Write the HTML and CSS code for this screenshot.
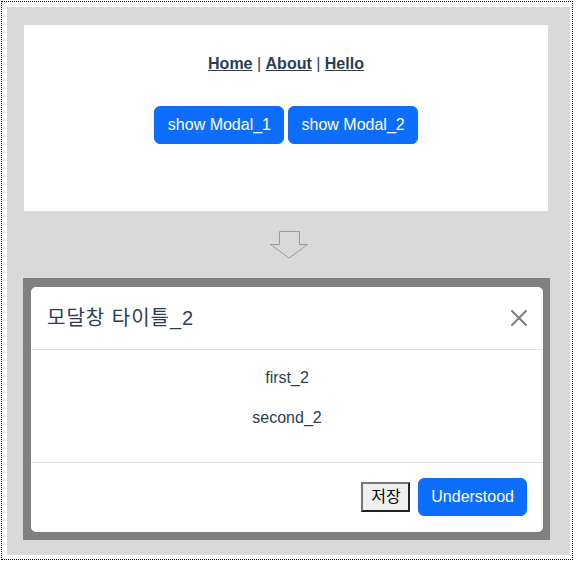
FILE: index.html
```html
<!DOCTYPE html>
<html lang="ko">
<head>
<meta charset="utf-8">
<title>Modal</title>
<link rel="stylesheet" href="styles.css">
</head>
<body>
<div class="frame">
  <div class="stage">
    <div class="app-panel">
      <nav class="nav"><a href="#">Home</a> | <a href="#">About</a> | <a href="#">Hello</a></nav>
      <div class="btn-row">
        <button class="btn">show Modal_1</button>
        <button class="btn">show Modal_2</button>
      </div>
    </div>
    <div class="arrow">
      <svg width="40" height="30" viewBox="0 0 40 30"><polygon points="10.5,1.5 30.5,1.5 30.5,14.5 38.5,14.5 20,28 1.5,14.5 10.5,14.5" fill="#d9d9d9" stroke="#9a9a9a" stroke-width="1"/></svg>
    </div>
    <div class="backdrop">
      <div class="modal">
        <div class="modal-header">
          <h5 class="modal-title">모달창 타이틀_2</h5>
          <button class="btn-close" aria-label="Close"><svg width="16" height="16" viewBox="0 0 16 16"><path d="M.293.293a1 1 0 0 1 1.414 0L8 6.586 14.293.293a1 1 0 1 1 1.414 1.414L9.414 8l6.293 6.293a1 1 0 0 1-1.414 1.414L8 9.414l-6.293 6.293a1 1 0 0 1-1.414-1.414L6.586 8 .293 1.707a1 1 0 0 1 0-1.414z" fill="#000"/></svg></button>
        </div>
        <div class="modal-body">
          <p>first_2</p>
          <p>second_2</p>
        </div>
        <div class="modal-footer">
          <button class="plain-btn">저장</button>
          <button class="btn">Understood</button>
        </div>
      </div>
    </div>
  </div>
</div>
</body>
</html>
```

FILE: styles.css
```css
* { box-sizing: border-box; }
body {
  margin: 0;
  font-family: "Liberation Sans", "Noto Sans CJK KR", sans-serif;
  color: #2c3e50;
  font-size: 16px;
}
.frame {
  margin: 1px 0 0 1px;
  width: 572px;
  border: 1px dotted #000;
  padding: 5px 2px 4px 5px;
}
.stage {
  width: 563px;
  height: 548px;
  background: #d9d9d9;
  display: flex;
  flex-direction: column;
  padding-top: 18px;
}
.app-panel {
  margin-left: 17px;
  width: 524px;
  height: 186px;
  background: #fff;
  padding-top: 30px;
  text-align: center;
}
.nav {
  line-height: 18px;
  font-weight: normal;
  color: #2c3e50;
}
.nav a {
  color: #2c3e50;
  font-weight: bold;
  text-decoration: underline;
}
.btn-row {
  margin-top: 33px;
  display: flex;
  justify-content: center;
  gap: 4px;
}
.btn {
  font-family: "Liberation Sans", sans-serif;
  font-size: 16px;
  line-height: 24px;
  color: #fff;
  background: #0d6efd;
  border: 1px solid #0d6efd;
  border-radius: 6px;
  padding: 6px 12px 6px 12.5px;
}
.arrow {
  height: 67px;
  display: flex;
  justify-content: center;
  padding-top: 19px;
}
.arrow svg { display: block; }
.backdrop {
  margin-left: 16px;
  width: 527px;
  height: 262px;
  background: #808080;
  padding: 9px 7px 8px 8px;
}
.modal {
  width: 512px;
  height: 245px;
  background: #fff;
  border-radius: 5px;
  display: flex;
  flex-direction: column;
}
.modal-header {
  display: flex;
  align-items: center;
  padding: 16px;
  border-bottom: 1px solid #dee2e6;
}
.modal-title {
  margin: 0;
  font-size: 20px;
  font-weight: 400;
  line-height: 30px;
  letter-spacing: 1px;
  color: #2c3e50;
}
.btn-close {
  margin: -8px -8px -8px auto;
  padding: 8px;
  width: 32px;
  height: 32px;
  border: 0;
  background: transparent;
  opacity: .5;
}
.btn-close svg { display: block; }
.modal-body {
  padding: 16px;
  text-align: center;
}
.modal-body p {
  margin: 0 0 16px;
  line-height: 24px;
}
.modal-footer {
  border-top: 1px solid #dee2e6;
  padding: 11px 12px;
  display: flex;
  justify-content: flex-end;
  align-items: center;
}
.modal-footer > * { margin: 4px; }
.plain-btn {
  font-family: "Liberation Sans", "Noto Sans CJK KR", sans-serif;
  font-size: 16px;
  line-height: 22px;
  padding: 2px 7px 2px 8px;
  background: #efefef;
  color: #000;
  border: 2px outset #767676;
  border-radius: 0;
}
```
